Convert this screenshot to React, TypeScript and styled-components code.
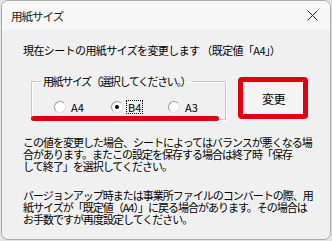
import React from "react";
import styled, { createGlobalStyle } from "styled-components";

const Global = createGlobalStyle`
  html, body { margin: 0; padding: 0; background: #e4e4e4; }
  body { width: 332px; height: 241px; overflow: hidden; }
  * { box-sizing: border-box; }
`;

const FONT = `"Noto Sans CJK JP", "Noto Sans", sans-serif`;

const Window = styled.div`
  margin-left: 1px;
  width: 330px;
  height: 240px;
  border: 1px solid #a9a9a9;
  border-radius: 7px;
  overflow: hidden;
  background: #f0f0f0;
  font-family: ${FONT};
  color: #000;
  display: flex;
  flex-direction: column;
`;

const TitleBar = styled.div`
  height: 29px;
  flex: none;
  display: flex;
  align-items: center;
  justify-content: space-between;
  padding: 0 6px 0 9px;
  background: #f7f7f7;
`;

const Title = styled.span`
  font-size: 11.5px;
  letter-spacing: -1px;
  line-height: 14px;
  color: #1a1a1a;
`;

const Close = styled.span`
  width: 24px;
  height: 20px;
  display: flex;
  align-items: center;
  justify-content: center;
`;

const Body = styled.div`
  padding: 14px 0 0 21px;
  display: flex;
  flex-direction: column;
`;

const Lead = styled.div`
  font-size: 11px;
  line-height: 13px;
  letter-spacing: -0.6px;
  white-space: nowrap;
`;

const Row = styled.div`
  margin-top: 18px;
  display: flex;
  align-items: flex-start;
  gap: 12px;
  padding-left: 8px;
`;

const GroupWrap = styled.div`
  position: relative;
`;

const Group = styled.fieldset`
  margin: 0;
  width: 187px;
  padding: 13px 0 5px 9px;
  border: 1px solid #c8c8c8;
  box-shadow: inset 1px 1px 0 #ffffff, 1px 1px 0 #ffffff;
`;

const Legend = styled.legend`
  padding: 0 2px;
  font-size: 11px;
  line-height: 12px;
  letter-spacing: -1.4px;
  white-space: nowrap;
`;

const RadioRow = styled.div`
  display: grid;
  grid-template-columns: repeat(3, 57px);
  padding-left: 13px;
  height: 14px;
  align-items: center;
`;

const RadioItem = styled.label`
  display: flex;
  align-items: center;
  gap: 4px;
  font-size: 11px;
  line-height: 12px;
`;

const Circle = styled.span<{ $on?: boolean }>`
  width: 12px;
  height: 12px;
  border-radius: 50%;
  background: #ffffff;
  border: 1px solid;
  border-color: #9a9a9a #e2e2e2 #e2e2e2 #9a9a9a;
  display: flex;
  align-items: center;
  justify-content: center;
  &::after {
    content: "";
    width: 4px;
    height: 4px;
    border-radius: 50%;
    background: ${(p) => (p.$on ? "#000" : "transparent")};
  }
`;

const RadioText = styled.span<{ $focus?: boolean }>`
  padding: 0 1px;
  outline: ${(p) => (p.$focus ? "1px dotted #000" : "none")};
  outline-offset: 0px;
`;

const Underline = styled.div`
  position: absolute;
  left: 0;
  top: 41px;
  width: 188px;
  height: 5px;
  border-radius: 3px;
  background: #e0000f;
`;

const Highlight = styled.div`
  margin-top: 2px;
  width: 70px;
  height: 42px;
  border: 5px solid #e0000f;
  border-radius: 4px;
  display: flex;
`;

const Button = styled.div`
  flex: 1;
  background: #f4f4f4;
  display: flex;
  align-items: center;
  justify-content: center;
  font-size: 12px;
  letter-spacing: -0.5px;
  padding-left: 1px;
`;

const Para = styled.div<{ $gap: number }>`
  margin-top: ${(p) => p.$gap}px;
  font-size: 11px;
  line-height: 12px;
  letter-spacing: -1px;
`;

const Line = styled.div`
  white-space: nowrap;
`;

export default function App() {
  return (
    <>
      <Global />
      <Window>
        <TitleBar>
          <Title>用紙サイズ</Title>
          <Close>
            <svg width="11" height="11" viewBox="0 0 11 11">
              <path d="M0.5 0.5 L10.5 10.5 M10.5 0.5 L0.5 10.5" stroke="#222" strokeWidth="1" />
            </svg>
          </Close>
        </TitleBar>
        <Body>
          <Lead>現在シートの用紙サイズを変更します （既定値「A4」）</Lead>
          <Row>
            <GroupWrap>
              <Group>
                <Legend>用紙サイズ（選択してください。）</Legend>
                <RadioRow>
                  <RadioItem>
                    <Circle />
                    <RadioText>A4</RadioText>
                  </RadioItem>
                  <RadioItem>
                    <Circle $on />
                    <RadioText $focus>B4</RadioText>
                  </RadioItem>
                  <RadioItem>
                    <Circle />
                    <RadioText>A3</RadioText>
                  </RadioItem>
                </RadioRow>
              </Group>
              <Underline />
            </GroupWrap>
            <Highlight>
              <Button>変更</Button>
            </Highlight>
          </Row>
          <Para $gap={16}>
            <Line>この値を変更した場合、シートによってはバランスが悪くなる場</Line>
            <Line>合があります。またこの設定を保存する場合は終了時「保存</Line>
            <Line>して終了」を選択してください。</Line>
          </Para>
          <Para $gap={17}>
            <Line>バージョンアップ時または事業所ファイルのコンバートの際、用</Line>
            <Line>紙サイズが「既定値（A4）」に戻る場合があります。その場合は</Line>
            <Line>お手数ですが再度設定してください。</Line>
          </Para>
        </Body>
      </Window>
    </>
  );
}
